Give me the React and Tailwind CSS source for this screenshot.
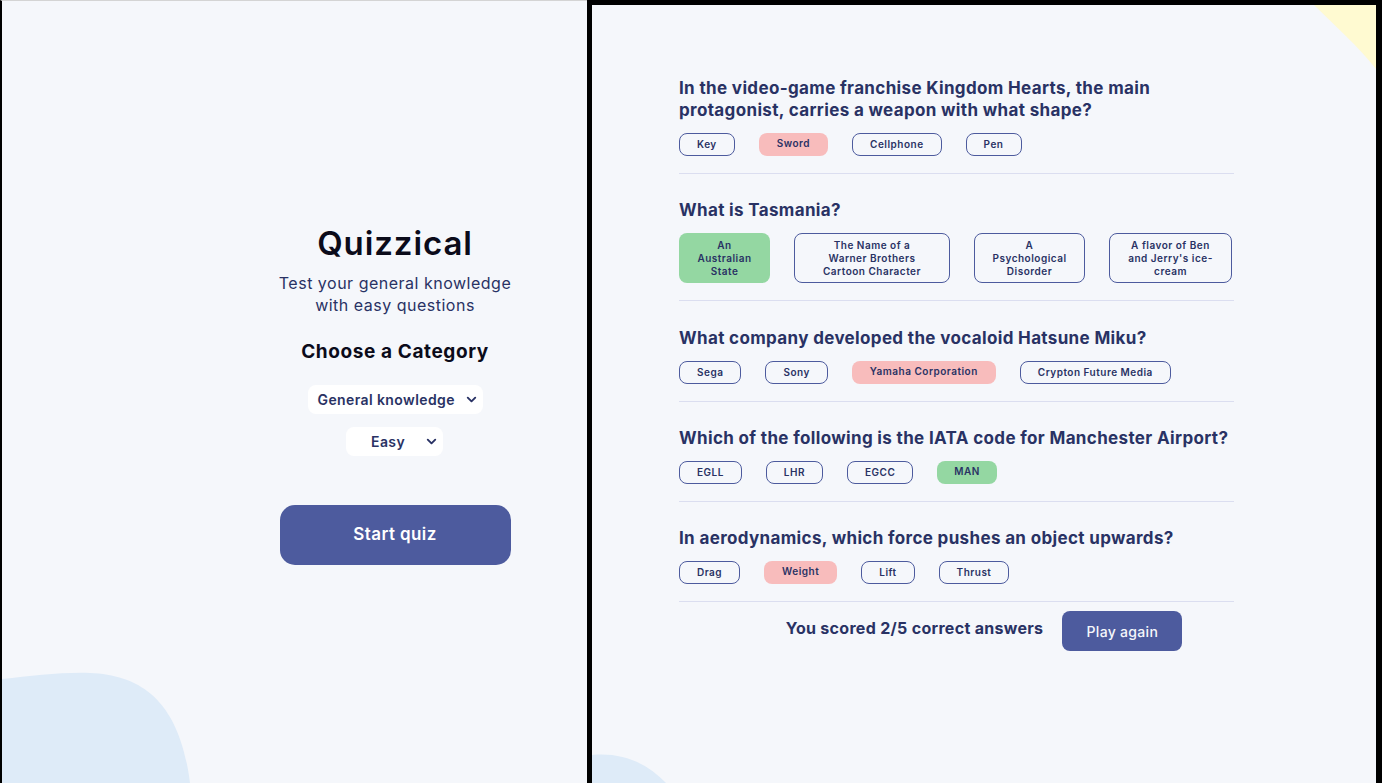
import React from "react";
import { ChevronDown } from "lucide-react";

const questions = [
  {
    q: "In the video-game franchise Kingdom Hearts, the main protagonist, carries a weapon with what shape?",
    answers: [
      { text: "Key" },
      { text: "Sword", state: "wrong" },
      { text: "Cellphone" },
      { text: "Pen" },
    ],
  },
  {
    q: "What is Tasmania?",
    answers: [
      { text: "An Australian State", state: "right", w: "w-[91px]", inner: "max-w-[62px]" },
      { text: "The Name of a Warner Brothers Cartoon Character", w: "w-[156px]", inner: "max-w-[104px]" },
      { text: "A Psychological Disorder", w: "w-[111px]", inner: "max-w-[74px]" },
      { text: "A flavor of Ben and Jerry's ice-cream", w: "w-[123px]", inner: "max-w-[86px]" },
    ],
  },
  {
    q: "What company developed the vocaloid Hatsune Miku?",
    extra: "pt-[1px]",
    answers: [
      { text: "Sega" },
      { text: "Sony" },
      { text: "Yamaha Corporation", state: "wrong" },
      { text: "Crypton Future Media" },
    ],
  },
  {
    q: "Which of the following is the IATA code for Manchester Airport?",
    answers: [
      { text: "EGLL" },
      { text: "LHR" },
      { text: "EGCC" },
      { text: "MAN", state: "right" },
    ],
  },
  {
    q: "In aerodynamics, which force pushes an object upwards?",
    answers: [
      { text: "Drag" },
      { text: "Weight", state: "wrong" },
      { text: "Lift" },
      { text: "Thrust" },
    ],
  },
];

const font = { fontFamily: "Inter, 'Noto Sans', sans-serif" };

const Answer = ({ a }) => {
  const base =
    "rounded-[8px] text-[10px] leading-[13px] font-semibold tracking-[0.5px] text-[#293264] text-center flex items-center justify-center";
  const size = a.w ? `${a.w} min-h-[50px] py-[3px]` : "h-[23px] px-[17px]";
  let look = "border border-[#4d5b9e]";
  if (a.state === "wrong") look = "bg-[#f8bcbc] text-[#4e4a6b] pb-[2px] px-[18px]";
  if (a.state === "right") look = "bg-[#94d7a2] pb-[2px]";
  return (
    <div className={`${base} ${size} ${look}`}>
      <span className={a.inner || ""}>{a.text}</span>
    </div>
  );
};

const Select = ({ label, className }) => (
  <div
    className={`flex items-center bg-white rounded-[8px] h-[29px] text-[14px] font-semibold tracking-[0.4px] text-[#293264] ${className}`}
  >
    <span className="flex-1">{label}</span>
    <ChevronDown size={15} strokeWidth={3} className="text-[#293264]" />
  </div>
);

export default function App() {
  return (
    <div className="flex h-[783px] w-full bg-black overflow-hidden" style={font}>
      {/* start screen */}
      <div className="relative w-[587px] shrink-0 h-full bg-[#f5f7fb] border-l-2 border-black border-t border-t-[#d4d4d4] overflow-hidden">
        <svg className="absolute left-0 bottom-0" width="200" height="115" viewBox="0 0 200 115">
          <path d="M0 11 C30 8 60 4 88 5 C140 7 178 34 188 115 L0 115 Z" fill="#deebf8" />
        </svg>
        <div className="relative flex flex-col items-center w-[300px] ml-[243px] pt-[221px]">
          <h1 className="text-[33px] leading-[42px] font-semibold text-[#0b0b1a] tracking-[0.9px]">Quizzical</h1>
          <p className="mt-[8px] text-[16px] leading-[22px] text-[#293264] text-center w-[260px] tracking-[0.5px]">
            Test your general knowledge with easy questions
          </p>
          <h2 className="mt-[24px] text-[19px] leading-[24px] font-bold text-[#0b0b1a] tracking-[0.6px]">
            Choose a Category
          </h2>
          <Select label="General knowledge" className="mt-[21px] w-[175px] pl-[10px] pr-[4px]" />
          <Select label="Easy" className="mt-[13px] w-[97px] pl-[25px] pr-[4px] ml-[-1px]" />
          <button className="mt-[49px] w-[231px] h-[60px] rounded-[15px] bg-[#4d5b9e] text-white text-[17px] font-semibold tracking-[0.4px]">
            Start quiz
          </button>
        </div>
      </div>

      {/* results screen */}
      <div className="relative flex-1 mt-[5px] ml-[5px] mr-[6px] bg-[#f5f7fb] overflow-hidden">
        <svg className="absolute right-0 top-0" width="62" height="64" viewBox="0 0 62 64">
          <path d="M0 0 L62 0 L62 64 C45 42 20 20 0 0 Z" fill="#fffad1" />
        </svg>
        <svg className="absolute left-0 bottom-0" width="80" height="30" viewBox="0 0 80 30">
          <path d="M0 2 C30 -1 55 10 74 30 L0 30 Z" fill="#deebf8" />
        </svg>
        <div className="relative w-[555px] ml-[87px] pt-[72px] flex flex-col">
          {questions.map((item, i) => (
            <div key={i} className={`border-b border-[#dbdef0] pb-[17px] mb-[25px] last:mb-0 ${item.extra || ""}`}>
              <h3 className="text-[17px] leading-[22px] font-bold tracking-[0.35px] text-[#293264]">{item.q}</h3>
              <div className="flex gap-6 mt-[12px] items-stretch">
                {item.answers.map((a, j) => (
                  <Answer key={j} a={a} />
                ))}
              </div>
            </div>
          ))}
        </div>
        <div className="relative flex items-center justify-center gap-[19px] mt-[9px]">
          <span className="text-[16px] font-bold tracking-[0.3px] text-[#293264] pb-[6px]">
            You scored 2/5 correct answers
          </span>
          <button className="w-[120px] h-[40px] rounded-[8px] bg-[#4d5b9e] text-[#f5f7fb] text-[14px] font-medium tracking-[0.3px]">
            Play again
          </button>
        </div>
      </div>
    </div>
  );
}
